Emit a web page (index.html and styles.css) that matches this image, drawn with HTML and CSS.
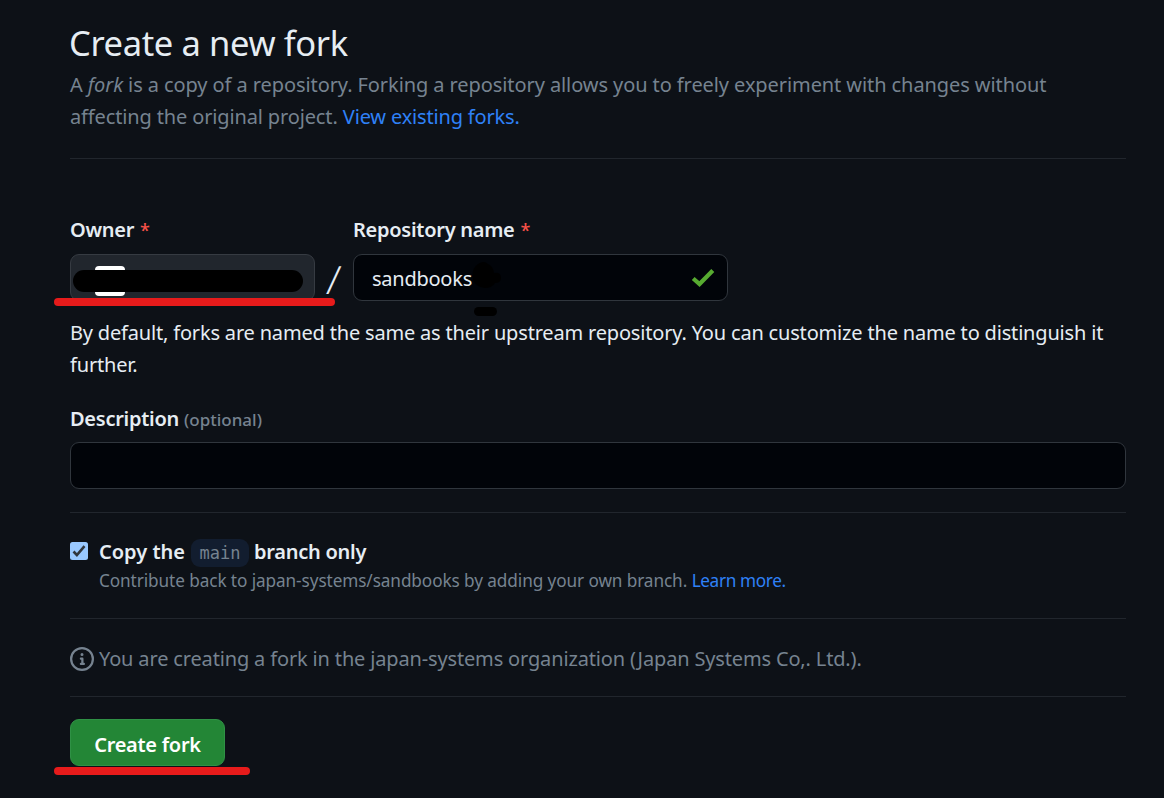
FILE: index.html
```html
<!DOCTYPE html>
<html lang="en">
<head>
<meta charset="utf-8">
<title>Create a new fork</title>
<link rel="stylesheet" href="styles.css">
</head>
<body>
<main class="page">
  <header class="intro">
    <h1 class="title"><span>Create a new fork</span></h1>
    <p class="lead"><span class="lead-a">A <em>fork</em> is a copy of a repository. Forking a repository allows you to freely experiment with changes without</span><br><span class="lead-b">affecting the original project.</span> <a class="link lead-link">View existing forks.</a></p>
  </header>
  <form class="form">
    <div class="names">
      <div class="owner">
        <div class="label"><span class="owner-label">Owner</span> <span class="star">*</span></div>
        <div class="owner-button"><i class="avatar"></i><i class="redaction"></i><i class="marker marker-owner"></i></div>
      </div>
      <div class="slash"><span>/</span></div>
      <div class="repo">
        <div class="label"><span class="repo-label">Repository name</span> <span class="star">*</span></div>
        <div class="input repo-input"><span class="repo-value">sandbooks</span>
          <svg class="smudge" width="34" height="56" viewBox="0 0 34 56"><path d="M8 3Q14-1 18 3Q23 5 24 12Q31 11 31 17Q31 22 25 22Q22 27 15 27Q5 26 3 18Q1 8 8 3Z"/><rect x="4" y="46" width="23" height="9" rx="4.5"/></svg>
          <svg class="check" width="24" height="20" viewBox="0 0 24 20"><path d="M2.2 10.5L8.5 16L21.8 2.5" fill="none" stroke="#57ab31" stroke-width="4.2"/></svg>
        </div>
      </div>
    </div>
    <p class="hint"><span class="hint-a">By default, forks are named the same as their upstream repository. You can customize the name to distinguish it</span><br><span class="hint-b">further.</span></p>
    <div class="label desc-row"><span class="desc-label">Description</span> <span class="optional">(optional)</span></div>
    <div class="input desc-input"></div>
    <div class="branch">
      <svg class="checkbox" width="19" height="19" viewBox="0 0 19 19"><rect width="18" height="18" rx="2.5" fill="#99c8ff"/><path d="M3.5 9.5L6.9 13L14.5 4.2" fill="none" stroke="#30363d" stroke-width="2.6"/></svg>
      <div class="branch-text">
        <div class="branch-title"><span class="copy">Copy the</span><code class="code"><span>main</span></code><span class="only">branch only</span></div>
        <div class="note"><span class="note-a">Contribute back to japan-systems/sandbooks by adding your own branch.</span> <a class="link note-link">Learn more.</a></div>
      </div>
    </div>
    <div class="info">
      <svg width="24" height="24" viewBox="0 0 16 16" fill="#768390"><path d="M0 8a8 8 0 1 1 16 0A8 8 0 0 1 0 8Zm8-6.5a6.5 6.5 0 1 0 0 13 6.5 6.5 0 0 0 0-13ZM6.5 7.75A.75.75 0 0 1 7.25 7h1a.75.75 0 0 1 .75.75v2.75h.25a.75.75 0 0 1 0 1.5h-2a.75.75 0 0 1 0-1.5h.25v-2h-.25a.75.75 0 0 1-.75-.75ZM8 6a1 1 0 1 1 0-2 1 1 0 0 1 0 2Z"/></svg>
      <span class="info-text">You are creating a fork in the japan-systems organization (Japan Systems Co,. Ltd.).</span>
    </div>
    <div class="submit"><div class="create"><span class="create-text">Create fork</span><i class="marker marker-create"></i></div></div>
  </form>
</main>
</body>
</html>
```
FILE: styles.css
```css
* { box-sizing: border-box; }
body { margin: 0; height: 798px; overflow: hidden; background: #0d1117; color: #e6edf3; font: 20px/32px "Noto Sans", "Open Sans", sans-serif; white-space: nowrap; }
.page { width: 1056px; margin-left: 70px; }
.intro { height: 159px; padding-top: 19px; border-bottom: 1px solid #21262d; }
.title { margin: 0; height: 50px; font-size: 34.5px; line-height: 48px; font-weight: 400; letter-spacing: -.37px; text-indent: -1px; }
.lead { margin: 0; color: #768390; }
.lead-a { letter-spacing: -.085px; }
.lead-b { letter-spacing: -.14px; }
.lead-link { letter-spacing: -.17px; }
.link { color: #2f81f7; }
.names { display: flex; height: 142px; padding-top: 55px; }
.owner { width: 245px; }
.repo { width: 375px; }
.label { height: 32px; font-weight: 600; letter-spacing: -.27px; }
.star { margin-left: 1px; color: #f85149; font-size: 18px; font-weight: 500; }
.owner-button { position: relative; height: 47px; margin-top: 8px; border: 1px solid #363b42; border-radius: 9px; background: #21262d; }
.avatar { position: absolute; left: 24px; top: 11px; width: 30px; height: 30px; border-radius: 4px; background: #fff; }
.redaction { position: absolute; left: 2px; top: 15px; width: 230px; height: 22px; border-radius: 11px; background: #000; }
.marker { position: absolute; height: 8px; border-radius: 4px; background: #e61b1b; }
.marker-owner { left: -17.5px; top: 43px; width: 281px; }
.slash { width: 38px; padding-top: 39px; text-align: center; font-size: 39px; line-height: 52px; font-weight: 300; }
.slash span { display: inline-block; transform: skewX(-5deg); }
.input { position: relative; height: 47px; border: 1px solid #30363d; border-radius: 9px; background: #010409; }
.repo-input { margin-top: 8px; padding: 8px 18px; }
.repo-value { letter-spacing: -.25px; }
.smudge { position: absolute; left: 116px; top: 6px; fill: #000; }
.check { position: absolute; left: 337px; top: 13px; }
.hint { margin: 0; padding-top: 16px; height: 79px; letter-spacing: -.18px; }
.desc-row { margin-top: 23px; }
.optional { color: #768390; font-size: 17px; font-weight: 500; letter-spacing: 0; }
.desc-input { margin-top: 7px; }
.branch { display: flex; height: 107px; margin-top: 23px; padding-top: 23px; border-top: 1px solid #21262d; border-bottom: 1px solid #21262d; }
.checkbox { margin: 6px 10px 0 0; }
.branch-title { display: flex; height: 32px; font-weight: 600; }
.only { letter-spacing: -.25px; }
.code { width: 58px; height: 28px; margin: 3px 5px 0 6px; border-radius: 9px; background: #121d2f; color: #768390; text-align: center; font: 400 17px/28px "DejaVu Sans Mono", monospace; }
.note { height: 26px; line-height: 26px; font-size: 17.2px; color: #768390; }
.note-a { letter-spacing: -.09px; }
.note-link { letter-spacing: -.36px; }
.info { display: flex; align-items: center; gap: 5px; height: 78px; padding-top: 3px; border-bottom: 1px solid #21262d; color: #768390; }
.info-text { position: relative; letter-spacing: -.155px; }
.submit { padding-top: 22px; }
.create { position: relative; width: 155px; height: 47px; border: 1px solid #2f9145; border-radius: 9px; background: #238636; color: #fff; text-align: center; line-height: 49px; font-weight: 600; letter-spacing: -.27px; }
.marker-create { left: -17.5px; top: 47px; width: 196px; }
```
